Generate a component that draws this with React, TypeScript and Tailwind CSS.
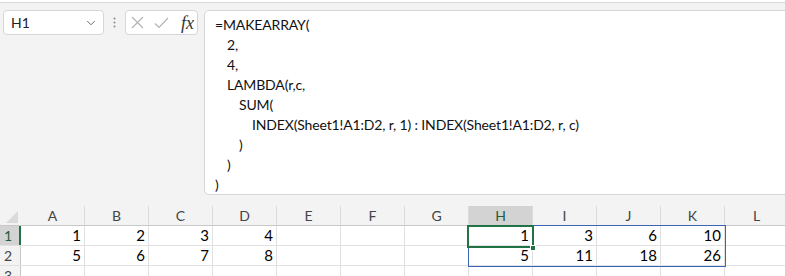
import React from 'react';
import { ChevronDown } from 'lucide-react';

const cols = ['A', 'B', 'C', 'D', 'E', 'F', 'G', 'H', 'I', 'J', 'K', 'L'];

const rows: (number | null)[][] = [
  [1, 2, 3, 4, null, null, null, 1, 3, 6, 10, null],
  [5, 6, 7, 8, null, null, null, 5, 11, 18, 26, null],
  [null, null, null, null, null, null, null, null, null, null, null, null],
];

const formula: [number, string][] = [
  [0, '=MAKEARRAY('],
  [1, '2,'],
  [1, '4,'],
  [1, 'LAMBDA(r,c,'],
  [2, 'SUM('],
  [3, 'INDEX(Sheet1!A1:D2, r, 1) : INDEX(Sheet1!A1:D2, r, c)'],
  [2, ')'],
  [1, ')'],
  [0, ')'],
];

const indent = ['pl-0', 'pl-[12px]', 'pl-[24px]', 'pl-[37px]'];

const FormulaBar = () => (
  <div className="flex items-start pt-[7px] h-[192px]">
    <div className="ml-[3px] w-[101px] h-[25px] bg-white border border-[#d6d6d6] rounded-[4px] flex items-center justify-between pl-[7px] pr-[5px]">
      <span className="text-[14px] text-[#222]">H1</span>
      <ChevronDown className="w-[14px] h-[14px] text-[#555]" strokeWidth={1.5} />
    </div>
    <div className="w-[21px] h-[25px] flex items-center justify-center">
      <svg width="3" height="11" viewBox="0 0 3 11">
        <circle cx="1.5" cy="1.5" r="1" fill="#8a8a8a" />
        <circle cx="1.5" cy="5.5" r="1" fill="#8a8a8a" />
        <circle cx="1.5" cy="9.5" r="1" fill="#8a8a8a" />
      </svg>
    </div>
    <div className="w-[73px] h-[25px] bg-white border border-[#d6d6d6] rounded-[4px] flex items-center pl-[5px] gap-[10px]">
      <svg width="13" height="13" viewBox="0 0 13 13">
        <path d="M1 1 L12 12 M12 1 L1 12" stroke="#b4b4b4" strokeWidth="1.2" fill="none" />
      </svg>
      <svg width="15" height="12" viewBox="0 0 15 12">
        <path d="M1 6.5 L5 10.5 L14 1" stroke="#b4b4b4" strokeWidth="1.2" fill="none" />
      </svg>
      <span className="ml-[2px] text-[18px] leading-none italic text-[#333] font-['Liberation_Serif',serif]">fx</span>
    </div>
    <div className="ml-[6px] flex-1 mr-[-6px] h-[185px] bg-white border border-[#d6d6d6] rounded-[5px] pl-[10px] pt-[4px] text-[14px] tracking-[-0.15px] leading-[20px] text-[#111]">
      {formula.map(([lvl, text], i) => (
        <div key={i} className={indent[lvl]}>
          {text}
        </div>
      ))}
    </div>
  </div>
);

const Grid = () => (
  <div className="relative mt-[11px]">
    <div className="flex h-[20px] border-b border-[#c8c8c8]">
      <div className="w-[21px] shrink-0 flex items-end justify-end pr-[3px] pb-[2px]">
        <svg width="12" height="12" viewBox="0 0 12 12">
          <path d="M12 0 L12 12 L0 12 Z" fill="#dadada" />
        </svg>
      </div>
      {cols.map((c) => (
        <div
          key={c}
          className={`w-[64px] shrink-0 border-r border-[#dcdcdc] flex items-center justify-center text-[14px] ${
            c === 'H' ? 'bg-[#d3d3d3] text-[#1f5f3a]' : 'text-[#444]'
          }`}
        >
          {c}
        </div>
      ))}
    </div>
    {rows.map((r, i) => (
      <div key={i} className="flex h-[20px] border-b border-[#e1e1e1]">
        <div
          className={`w-[21px] shrink-0 flex items-center pl-[4px] text-[14px] ${
            i === 0 ? 'bg-[#d3d3d3] text-[#1f5f3a] border-r-2 border-[#217346]' : 'text-[#444] border-r border-[#c8c8c8]'
          }`}
        >
          {i + 1}
        </div>
        {r.map((v, j) => (
          <div
            key={j}
            className="w-[64px] shrink-0 bg-white border-r border-[#e1e1e1] flex items-center justify-end pr-[3px] text-[15px] text-black"
          >
            {v}
          </div>
        ))}
      </div>
    ))}
    <div className="absolute left-[468px] top-[19px] w-[258px] h-[42px] border border-[#3d64b4] pointer-events-none" />
    <div className="absolute left-[467px] top-[19px] w-[67px] h-[23px] border-2 border-[#217346] pointer-events-none" />
    <div className="absolute left-[530px] top-[39px] w-[6px] h-[6px] bg-[#217346] border border-white pointer-events-none" />
  </div>
);

export default function App() {
  return (
    <div className="w-[785px] h-[276px] overflow-hidden bg-[#f3f3f3] font-['Lato','Liberation_Sans',sans-serif]">
      <div className="h-[3px] bg-white border-b border-[#dadada]" />
      <FormulaBar />
      <Grid />
    </div>
  );
}
